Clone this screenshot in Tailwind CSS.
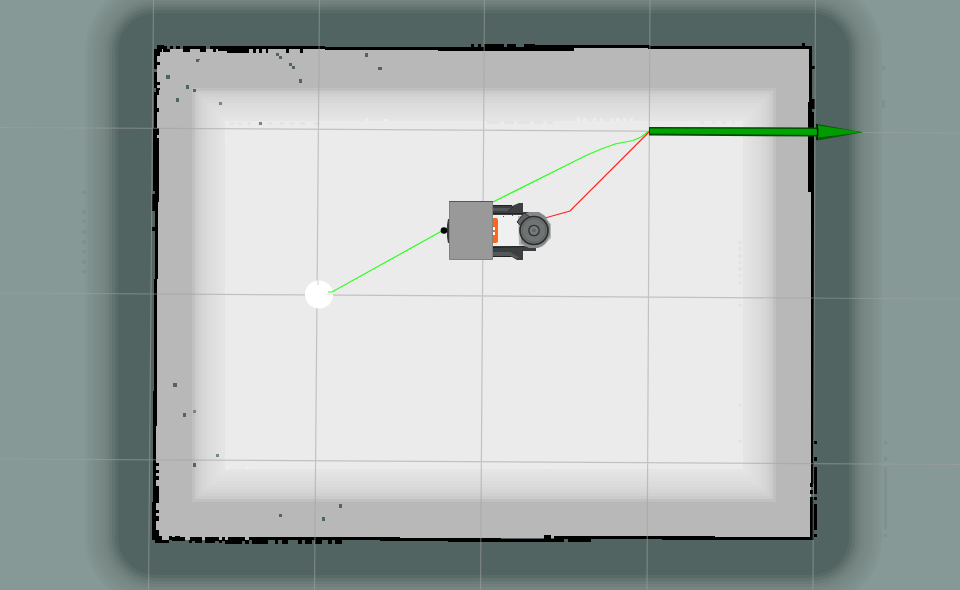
<!DOCTYPE html>
<html lang="en">
<head>
<meta charset="utf-8">
<meta name="viewport" content="width=device-width, initial-scale=1">
<title>Robot navigation map</title>
<script src="https://cdn.jsdelivr.net/npm/@tailwindcss/browser@4"></script>
</head>
<body class="bg-[#869996]">
<main class="w-full overflow-hidden">
<svg class="block h-auto w-full" viewBox="0 0 960 590" role="img" aria-label="Occupancy map with robot, planned paths and goal arrow">
  <!-- cost falloff outside the walls -->
  <g id="outer"></g>
  <g shape-rendering="crispEdges">
    <path fill="#7f908d" d="M82 191h4v3h-4zM82 210h4v4h-4zM82 220h4v3h-4zM82 230h4v4h-4zM82 240h4v4h-4zM82 250h4v3h-4zM82 260h4v4h-4zM82 270h4v3h-4zM882 66h3v4h-3zM882 100h3v8h-3zM884 441h3v3h-3zM884 457h3v4h-3zM884 467h3v62h-3zM884 534h3v3h-3z"/>
    <path fill="#b8b8b8" d="M157 49H400V50H574V48H811V538H400V540H155V300H157Z"/>
    <!-- cost falloff inside the walls -->
    <g id="inner"></g>
    <path fill="#e4e4e4" d="M230 122h4v3h-4zM238 122h4v3h-4zM248 122h3v3h-3zM258 122h3v3h-3zM268 122h4v3h-4zM280 122h4v3h-4zM290 122h4v3h-4zM300 122h5v3h-5zM313 122h7v3h-7zM487 121h13v3h-13zM504 121h10v3h-10zM517 121h13v3h-13zM534 121h9v3h-9zM547 121h6v3h-6zM700 121h4v3h-4zM712 121h4v3h-4zM722 121h4v3h-4zM732 121h3v3h-3zM738 241h4v3h-4zM738 247h4v4h-4zM738 254h4v4h-4zM738 261h4v3h-4zM738 267h4v4h-4zM738 274h4v3h-4zM738 281h4v3h-4zM738 304h4v3h-4zM738 404h4v3h-4zM738 440h4v3h-4z"/>
    <path fill="#ededed" d="M365 118h3v4h-3zM384 119h4v3h-4zM577 117h3v4h-3zM583 118h4v3h-4zM593 118h3v3h-3zM600 118h3v3h-3zM610 118h3v3h-3zM616 118h4v3h-4zM623 118h3v3h-3zM630 118h3v3h-3zM225 135h4v3h-4zM226 467h3v3h-3zM246 467h3v3h-3zM545 466h6v3h-6z"/>
    <!-- walls -->
    <path d="M157 45h7v1h3v3h-10zM170 46h3v3h-3zM176 46h4v3h-4zM183 46h23v3h-23zM210 46h115v3h-115zM325 47h159v3h-159zM484 44h20v4h-20zM507 44h9v4h-9zM524 44h11v4h-11zM471 44h3v4h-3zM478 44h3v4h-3zM438 47h136v4h-136zM535 45h115v3h-115zM648 46h163v3h-163zM802 43h3v4h-3zM158 49h4v3h-4zM163 49h7v3h-7zM183 48h7v4h-7zM200 48h6v4h-6zM213 49h3v3h-3zM218 48h9v3h-9zM227 49h22v4h-22zM253 49h3v4h-3zM259 49h3v4h-3zM266 49h2v4h-2zM286 49h3v4h-3zM300 49h3v4h-3z"/>
    <path d="M154 49h3v20h-3zM154 72h3v16h-3zM154 92h3v36h-3zM156 49h4v7h-4zM156 62h4v3h-4zM156 82h4v3h-4zM156 88h4v2h-4zM156 90h3v5h-3zM156 108h3v4h-3zM153 128h4v63h-4zM156 128h3v7h-3zM156 138h3v64h-3zM152 194h6v17h-6zM155 191h3v88h-3zM152 227h4v4h-4zM154 279h3v112h-3zM153 391h4v35h-4zM153 426h3v76h-3zM156 463h3v3h-3zM156 470h3v3h-3zM156 476h3v4h-3zM156 486h3v17h-3zM152 502h4v38h-4zM156 510h3v3h-3zM156 516h3v5h-3zM156 530h3v10h-3z"/>
    <path fill="#526461" d="M153 191h2v3h-2zM152 211h3v16h-3zM152 231h3v48h-3z"/>
    <path d="M152 536h10v4h-10zM155 540h14v3h-14zM169 536h3v4h-3zM175 536h5v4h-5zM172 537h13v4h-13zM189 540h3v3h-3zM190 537h12v4h-12zM195 540h7v3h-7zM205 537h14v4h-14zM205 540h10v3h-10zM222 537h3v4h-3zM219 540h3v3h-3zM225 540h17v4h-17zM228 537h17v4h-17zM249 537h151v3h-151zM245 540h4v4h-4zM252 540h16v4h-16zM275 540h3v4h-3zM282 540h6v4h-6zM298 540h4v4h-4zM305 540h7v4h-7zM315 540h7v4h-7zM328 540h4v4h-4zM335 540h7v4h-7zM380 538h68v3h-68zM448 538h53v4h-53zM501 539h63v3h-63zM544 535h7v4h-7zM554 536h61v3h-61zM568 539h23v3h-23zM662 536h53v4h-53zM715 537h99v3h-99z"/>
    <path d="M809 46h3v56h-3zM812 66h3v3h-3zM808 102h4v90h-4zM812 99h3v10h-3zM812 112h2v80h-2zM811 192h3v292h-3zM810 483h3v4h-3zM810 490h3v4h-3zM810 497h4v43h-4zM814 441h3v3h-3zM814 457h3v4h-3zM814 467h3v27h-3zM814 497h3v3h-3zM814 504h3v26h-3zM814 534h3v3h-3z"/>
    <path d="M615 536h47v3h-47z"/>
    <!-- isolated unknown cells -->
    <path fill="#526461" d="M196 59h4v1h-1v2h-3zM166 75h4v4h-4zM186 85h3v4h-3zM193 89h3v3h-3zM176 98h3v4h-3zM276 53h3v3h-3zM279 56h3v3h-3zM289 63h3v3h-3zM292 66h3v3h-3zM299 79h3v4h-3zM365 53h3v4h-3zM378 67h4v3h-4zM173 383h4v4h-4zM183 413h3v4h-3zM193 463h3v4h-3zM279 514h3v3h-3zM322 517h3v4h-3zM339 504h3v4h-3z"/>
    <path fill="#748783" d="M219 102h3v3h-3zM259 122h3v3h-3zM193 410h3v3h-3zM216 454h3v3h-3z"/>
  </g>
  <!-- reference grid -->
  <path stroke="#a0a0a0" stroke-opacity=".55" stroke-width="1.2" d="M0 127.500L960 133M0 293L960 299M0 459L960 464.500M153.500 0L148.500 590M319.500 0L314.500 590M484.500 0L480.500 590M650 0L647 590M815.500 0L813 590"/>
  <circle cx="319" cy="294.500" r="14" fill="#fff"/>
  <path d="M317 280h2v5h-2zM326 294h6v1h-6z" fill="#e8e8e8"/>
  <!-- planned paths -->
  <g fill="none" stroke-width="1.200">
    <path stroke="#2bff1c" d="M328 292h4L449 227M493 202L585 156Q600 149 615 144L633 140.500 641 137 649 131"/>
    <path stroke="#f22" d="M545 218L570 211 649 132"/>
  </g>
  <!-- robot -->
  <g>
    <path fill="#f0f0f0" d="M493 213h33v34h-33z"/>
    <path fill="#555" d="M512 215h1v1h-1zM512 246h1v1h-1zM503 216h1v1h-1z"/>
    <path fill="#3c3f40" d="M492 206h20l7-3h4v9h14v3h-44zM492 246h44v5h-13v9h-6l-5-3h-20z"/>
    <path fill="#54585a" d="M493 208h20l-4 3h-16zM493 252h17l10 6h-4l-5-2h-18z"/>
    <path stroke="#202324" fill="none" d="M493 205.500h19M508 211l5-4M493 213.500h30M493 247.500l32-1M493 256.500h18"/>
    <path fill="#ff641f" d="M492 218h4q2 0 2 2v21q0 2-2 2h-4z"/>
    <path fill="#fff" d="M492 227h3v3h-3zM492 232h3v3h-3z"/>
    <path fill="#b4b7b6" d="M518 216h8l5-3 11 1 9 10v14l-9 9-8 1-15-3z"/>
    <path fill="#858888" d="M521 216l8-4h10l6 4 5 9v11l-5 8-7 4h-9l-8-5z"/>
    <path fill="#606465" stroke="#303334" d="M517 222l7-9 6 4-8 10z"/>
    <circle cx="534" cy="230.500" r="14" fill="#707373" stroke="#2b2e2f" stroke-width="1.700"/>
    <circle cx="534" cy="230.500" r="11.800" fill="none" stroke="#5a5d5d" stroke-width=".8"/>
    <circle cx="534" cy="230.500" r="5.200" fill="#777a7a" stroke="#2d3030" stroke-width="1.300"/>
    <circle cx="534" cy="230.500" r="2.500" fill="#646767" stroke="#858888" stroke-width=".6"/>
    <path fill="#35393a" d="M449 219h-1l-1 6v12l1 6h1z"/>
    <path fill="#999" stroke="#808080" d="M449.500 201.500h43v58h-43z"/>
    <path stroke="#555" d="M449 201.500h44"/>
    <circle cx="444" cy="230.500" r="3.300" fill="#050505"/>
  </g>
  <!-- goal pose -->
  <g>
    <path fill="#004c00" d="M649 127L817 127.500V136.500L649 135.500Z"/>
    <path fill="#00a500" d="M650 128.500L817 129V135L650 133.500Z"/>
    <path fill="#075807" d="M817 124L863 132.300 817 140.500Z"/>
    <path fill="#009c00" d="M818 125.500L863 132.300 818 137.500Z"/>
    <path fill="none" stroke="#061506" stroke-width="1.500" d="M816.500 124Q819 132 816.500 140"/>
  </g>
</svg>
</main>
<script>
  const ns = 'http://www.w3.org/2000/svg';
  function addBox(id, x, y, right, bottom, radius, fill) {
    const box = document.createElementNS(ns, 'rect');
    const values = { x, y, width: right - x, height: bottom - y, rx: radius, fill };
    for (const [key, value] of Object.entries(values)) box.setAttribute(key, value);
    document.getElementById(id).append(box);
  }
  const outerShades = ['#526461', '#586b68', '#62736f', '#6a7b77', '#71807d', '#758582',
    '#788885', '#7a8b87', '#7c8d89', '#7e8f8c', '#80928f', '#839592'];
  for (let i = outerShades.length - 1; i >= 0; i--) {
    const d = i * 3;
    addBox('outer', 118 - d, 13 - d, 849 + d, 575 + d, 38 + d, outerShades[i]);
  }
  const shades = [192, 203, 209, 213, 216, 219, 221, 223, 225, 227, 229, 235];
  shades.forEach((shade, i) => {
    const d = i * 3;
    addBox('inner', 192 + d, 88 + d, 776 - d, 502 - d, 0, `rgb(${shade} ${shade} ${shade})`);
  });
</script>
</body>
</html>
